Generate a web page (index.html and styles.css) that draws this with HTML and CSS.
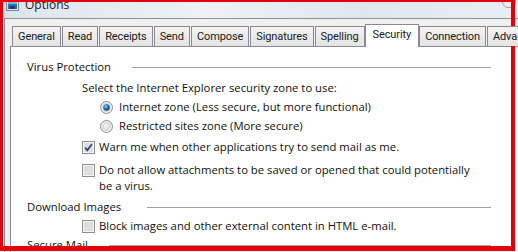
FILE: index.html
```html
<html>

<head>
    <title>Options</title>
    <link rel="stylesheet" href="styles.css">
</head>

<body>
    <div class="window">
        <div class="titlebar">
            <svg class="app_icon" width="13" height="11" viewBox="0 0 13 11">
                <rect x="0.5" y="-2" width="12" height="12.5" fill="#dfe6ee" stroke="#7b8794"/>
                <rect x="2" y="1" width="9" height="8" fill="#2f6fb0"/>
                <rect x="2" y="1" width="9" height="3" fill="#7fb2e0"/>
                <rect x="4" y="6" width="5" height="3" fill="#1d3f66"/>
            </svg>
            <span class="title">Options</span>
            <span class="corner"></span>
        </div>
        <div class="frame">
            <div class="tabs">
                <div class="tab">General</div>
                <div class="tab">Read</div>
                <div class="tab">Receipts</div>
                <div class="tab">Send</div>
                <div class="tab">Compose</div>
                <div class="tab">Signatures</div>
                <div class="tab">Spelling</div>
                <div class="tab active">Security</div>
                <div class="tab">Connection</div>
                <div class="tab">Advanced</div>
            </div>
            <div class="panel">
                <div class="group_head">
                    <span>Virus Protection</span>
                    <span class="rule"></span>
                </div>
                <div class="row level1 gap_first">Select the Internet Explorer security zone to use:</div>
                <div class="row level2 gap_sm">
                    <svg class="radio" width="13" height="13" viewBox="0 0 13 13">
                        <defs>
                            <radialGradient id="dot" cx="0.4" cy="0.35" r="0.7">
                                <stop offset="0" stop-color="#9ad2f5"/>
                                <stop offset="0.5" stop-color="#2a6fb0"/>
                                <stop offset="1" stop-color="#163b63"/>
                            </radialGradient>
                        </defs>
                        <circle cx="6.5" cy="6.5" r="6" fill="#eef0f2" stroke="#8c8f93"/>
                        <circle cx="6.5" cy="6.5" r="4.5" fill="#d6dbe0"/>
                        <circle cx="6.5" cy="6.5" r="3.2" fill="url(#dot)"/>
                    </svg>
                    <span>Internet zone (Less secure, but more functional)</span>
                </div>
                <div class="row level2 gap_sm">
                    <svg class="radio" width="13" height="13" viewBox="0 0 13 13">
                        <circle cx="6.5" cy="6.5" r="6" fill="#eef0f2" stroke="#8c8f93"/>
                        <circle cx="6.5" cy="6.5" r="4.5" fill="#d9dcdf"/>
                        <circle cx="6" cy="6" r="2.5" fill="#eceef0"/>
                    </svg>
                    <span>Restricted sites zone (More secure)</span>
                </div>
                <div class="row level1 gap_md">
                    <svg class="check" width="13" height="13" viewBox="0 0 13 13">
                        <rect x="0.5" y="0.5" width="12" height="12" fill="#f4f4f4" stroke="#8e8f8f"/>
                        <rect x="2" y="2" width="9" height="9" fill="#dcdee2"/>
                        <path d="M3.2 6.6 L5.3 9.2 L9.8 3.2" fill="none" stroke="#2b4776" stroke-width="1.8"/>
                    </svg>
                    <span>Warn me when other applications try to send mail as me.</span>
                </div>
                <div class="row level1 gap_lg">
                    <svg class="check" width="13" height="13" viewBox="0 0 13 13">
                        <rect x="0.5" y="0.5" width="12" height="12" fill="#f4f4f4" stroke="#8e8f8f"/>
                        <rect x="2" y="2" width="9" height="9" fill="#dcdee2"/>
                    </svg>
                    <span class="wrap">Do not allow attachments to be saved or opened that could potentially be a virus.</span>
                </div>
                <div class="group_head gap_md">
                    <span>Download Images</span>
                    <span class="rule rule_wide"></span>
                </div>
                <div class="row level1 gap_sm">
                    <svg class="check" width="13" height="13" viewBox="0 0 13 13">
                        <rect x="0.5" y="0.5" width="12" height="12" fill="#f4f4f4" stroke="#8e8f8f"/>
                        <rect x="2" y="2" width="9" height="9" fill="#dcdee2"/>
                    </svg>
                    <span>Block images and other external content in HTML e-mail.</span>
                </div>
                <div class="group_head gap_sm">
                    <span>Secure Mail</span>
                    <span class="rule"></span>
                </div>
            </div>
        </div>
    </div>
    <div class="highlight"></div>
</body>

</html>
```

FILE: styles.css
```css
body {
    margin: 0;
    width: 518px;
    height: 252px;
    overflow: hidden;
    background-color: #ffffff;
    font-family: "Open Sans", "Noto Sans", sans-serif;
    font-size: 12px;
    color: #111111;
    position: relative;
}

.window {
    display: flex;
    flex-direction: column;
    height: 100%;
}

.titlebar {
    height: 18px;
    flex: none;
    display: flex;
    align-items: flex-start;
    background: linear-gradient(100deg, #dbe3eb 0%, #eef2f6 40%, #dfe6ee 70%, #e9eef3 100%);
    overflow: hidden;
}

.app_icon {
    margin-left: 6px;
}

.title {
    margin-left: 6px;
    margin-top: -3px;
    line-height: 16px;
    color: #1a1a1a;
}

.corner {
    margin-left: auto;
    margin-right: 2px;
    margin-top: -6px;
    width: 12px;
    height: 12px;
    border: 1px solid #9aa3ad;
    border-radius: 6px;
}

.frame {
    flex: 1;
    display: flex;
    flex-direction: column;
    margin-left: 4px;
    border-top: 1px solid #8d9196;
    border-left: 1px solid #8d9196;
    background-color: #f0f0f0;
}

.tabs {
    display: flex;
    align-items: flex-end;
    height: 27px;
    padding-left: 7px;
    gap: 1px;
    position: relative;
    z-index: 1;
    white-space: nowrap;
    font-family: Roboto, "Liberation Sans", sans-serif;
    font-size: 11px;
    letter-spacing: -0.1px;
}

.tab {
    height: 19px;
    line-height: 19px;
    padding: 0 5px;
    border: 1px solid #898c95;
    border-bottom: none;
    background: linear-gradient(#f3f3f3, #e3e3e3);
    color: #1a1a1a;
}

.tab.active {
    height: 22px;
    line-height: 19px;
    margin: 0 -1px -1px;
    padding: 0 7px;
    background: #ffffff;
}

.panel {
    flex: 1;
    margin-left: 5px;
    border-top: 1px solid #898c95;
    border-left: 1px solid #898c95;
    background-color: #ffffff;
    padding: 12px 0 0 16px;
    display: flex;
    flex-direction: column;
    font-size: 11.3px;
    line-height: 16px;
}

.group_head {
    display: flex;
    align-items: center;
    width: 464px;
    height: 16px;
}

.rule {
    flex: 1;
    margin-left: 21px;
    border-top: 1px solid #a0a0a0;
}

.rule_wide {
    margin-left: 26px;
}

.row {
    display: flex;
    align-items: flex-start;
}

.level1 {
    padding-left: 55px;
}

.level2 {
    padding-left: 73px;
}

.wrap {
    width: 378px;
}

.gap_first {
    margin-top: 5px;
}

.gap_sm {
    margin-top: 3px;
}

.gap_md {
    margin-top: 5px;
}

.gap_lg {
    margin-top: 7px;
}

.radio {
    flex: none;
    margin: 2px 6px 0 0;
}

.check {
    flex: none;
    margin: 2px 4px 0 0;
}

.highlight {
    position: absolute;
    left: 0;
    top: 0;
    width: 515px;
    height: 251px;
    box-sizing: border-box;
    border-style: solid;
    border-color: #e3000b;
    border-width: 2px 4px 5px 3px;
}
```
